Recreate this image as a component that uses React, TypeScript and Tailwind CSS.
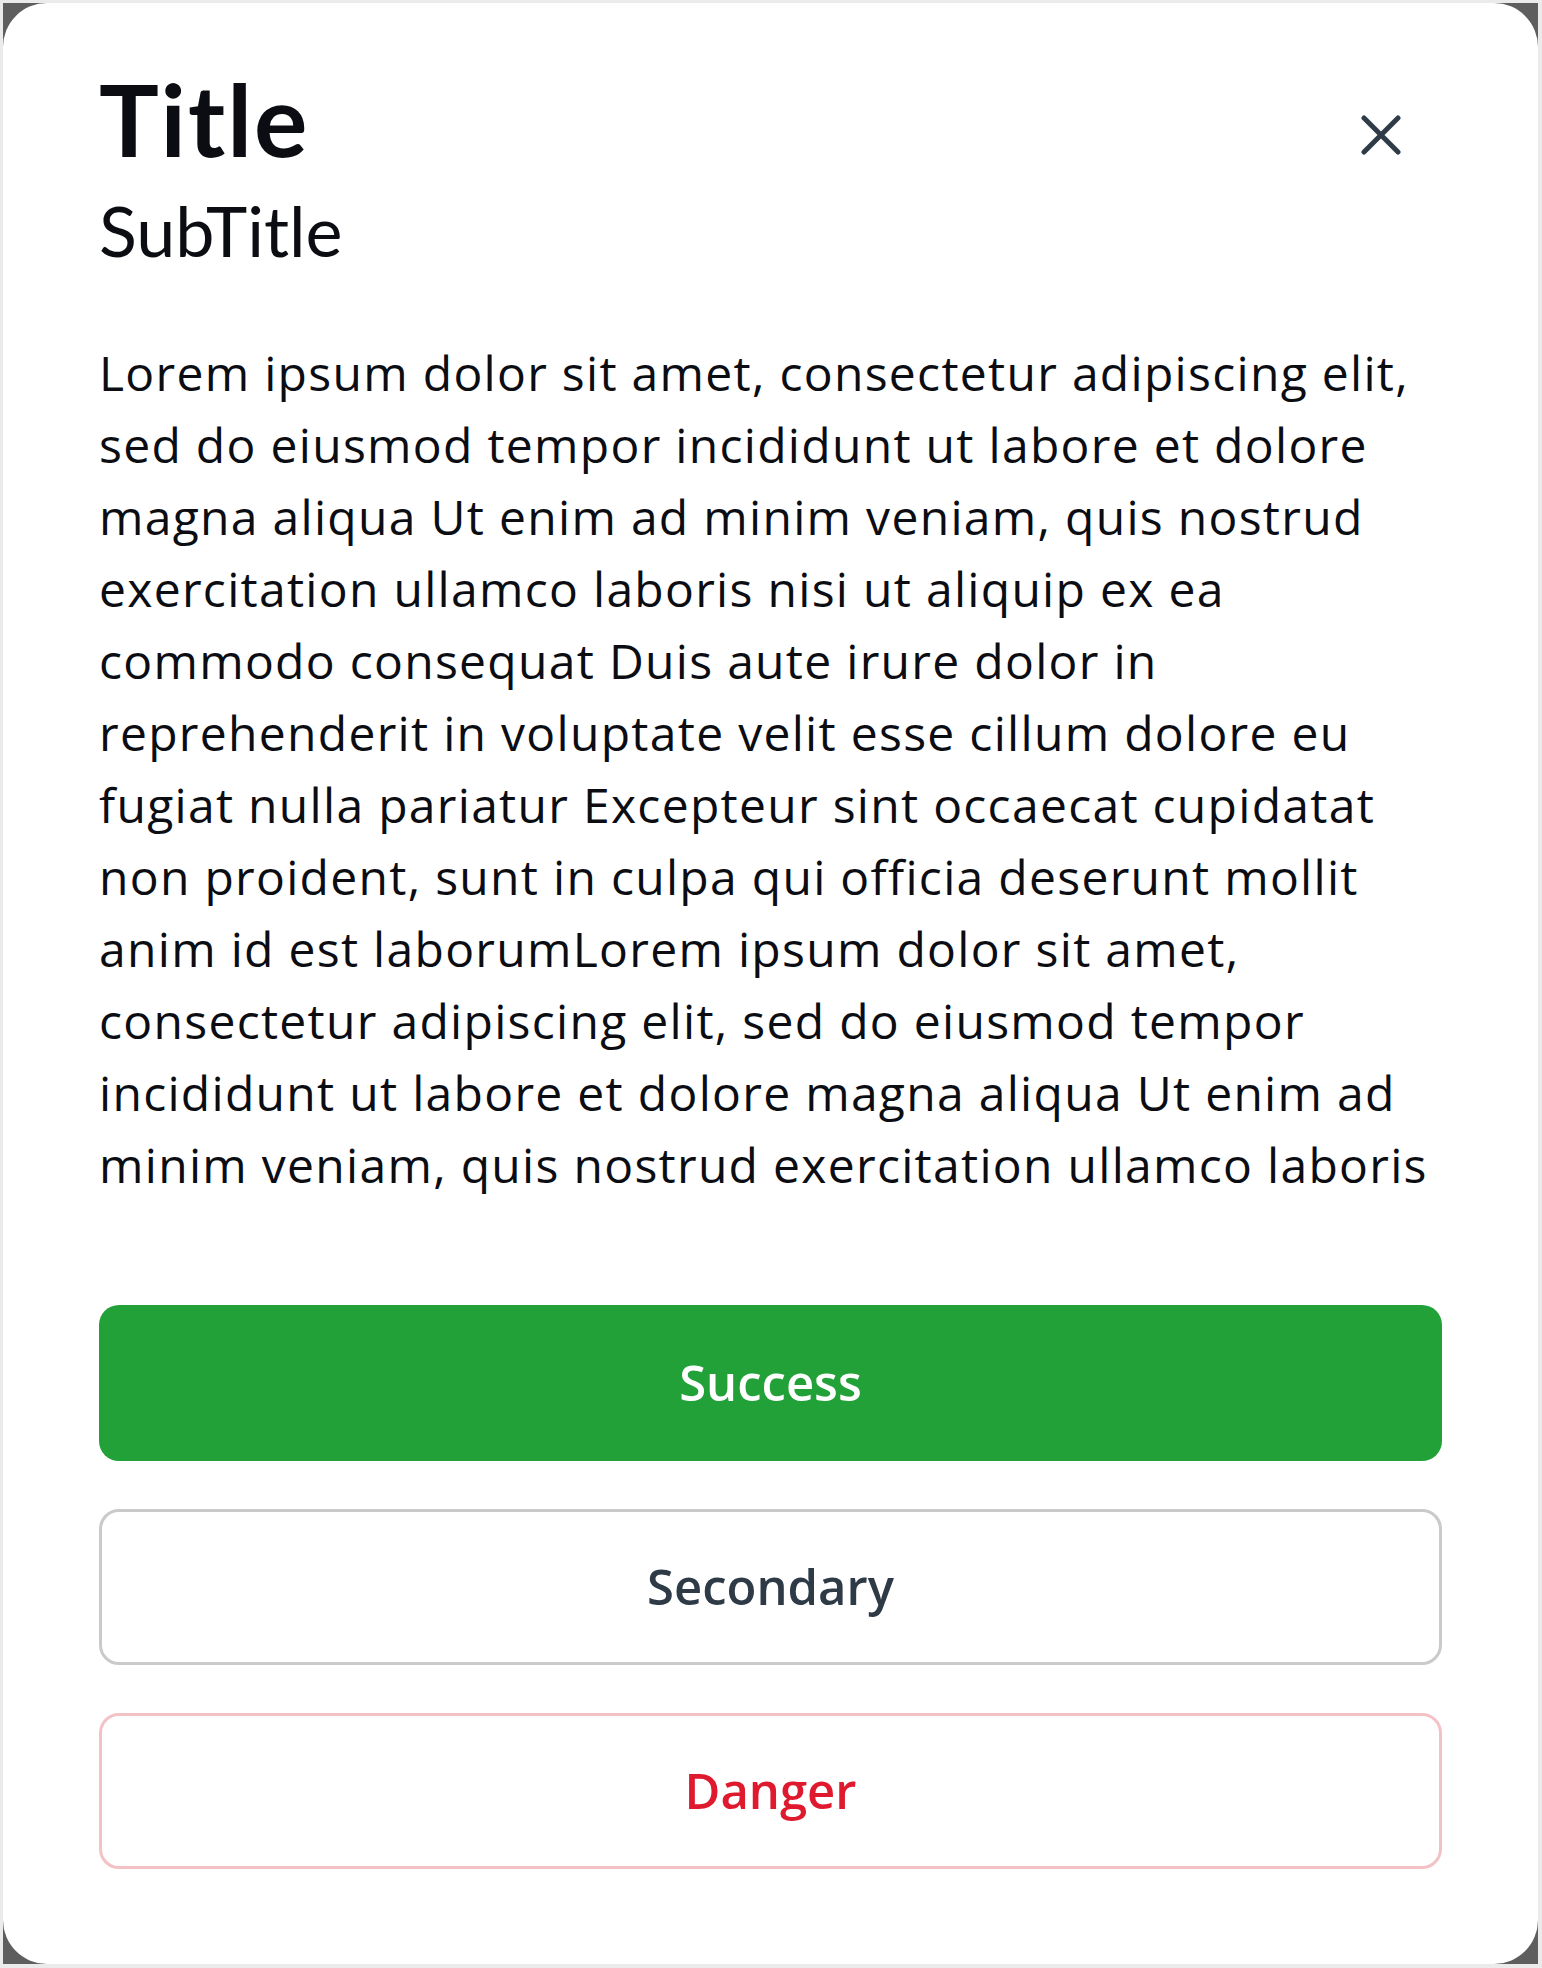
const bodyLines = [
  'Lorem ipsum dolor sit amet, consectetur adipiscing elit,',
  'sed do eiusmod tempor incididunt ut labore et dolore',
  'magna aliqua Ut enim ad minim veniam, quis nostrud',
  'exercitation ullamco laboris nisi ut aliquip ex ea',
  'commodo consequat Duis aute irure dolor in',
  'reprehenderit in voluptate velit esse cillum dolore eu',
  'fugiat nulla pariatur Excepteur sint occaecat cupidatat',
  'non proident, sunt in culpa qui officia deserunt mollit',
  'anim id est laborumLorem ipsum dolor sit amet,',
  'consectetur adipiscing elit, sed do eiusmod tempor',
  'incididunt ut labore et dolore magna aliqua Ut enim ad',
  'minim veniam, quis nostrud exercitation ullamco laboris',
];

export default function App() {
  return (
    <div className="w-full h-[1968px] bg-[#ebebeb] pt-[3px] pl-[3px] pr-[4px] pb-[4px]">
      <div className="h-full bg-[#5e5e5e]">
        <div
          className="h-full bg-white rounded-[44px] px-[96px] pt-[55px] text-[#0b0d12]"
          style={{ fontFamily: 'Lato, "Noto Sans", sans-serif' }}
        >
          <header className="flex items-start justify-between">
            <div>
              <h1 className="text-[100px] leading-[120px] font-bold tracking-[2px]">Title</h1>
              <h2 className="mt-[10px] text-[70px] leading-[84px] font-normal">SubTitle</h2>
            </div>
            <button
              type="button"
              aria-label="Close"
              className="mt-[57px] mr-[41px] flex h-[40px] w-[40px] items-center justify-center text-[#2f3c48]"
            >
              <svg viewBox="0 0 40 40" className="h-[40px] w-[40px]" fill="none">
                <path d="M3 3 L37 37 M37 3 L3 37" stroke="currentColor" strokeWidth="5" strokeLinecap="round" />
              </svg>
            </button>
          </header>

          <p
            className="mt-[65px] text-[48px] leading-[72px] tracking-[1.3px]"
            style={{ fontFamily: '"Open Sans", sans-serif' }}
          >
            {bodyLines.map((line) => (
              <span key={line} className="block whitespace-nowrap">
                {line}
              </span>
            ))}
          </p>

          <div
            className="mt-[104px] flex flex-col gap-[48px] text-[49px] font-semibold"
            style={{ fontFamily: '"Open Sans", sans-serif' }}
          >
            <button
              type="button"
              className="h-[156px] w-full rounded-[20px] bg-[#22a139] text-white"
            >
              Success
            </button>
            <button
              type="button"
              className="h-[156px] w-full rounded-[20px] border-[3px] border-[#c9cacc] bg-white text-[#2e3b47]"
            >
              Secondary
            </button>
            <button
              type="button"
              className="h-[156px] w-full rounded-[20px] border-[3px] border-[#f3c2c7] bg-white text-[#df1a2e]"
            >
              Danger
            </button>
          </div>
        </div>
      </div>
    </div>
  );
}
